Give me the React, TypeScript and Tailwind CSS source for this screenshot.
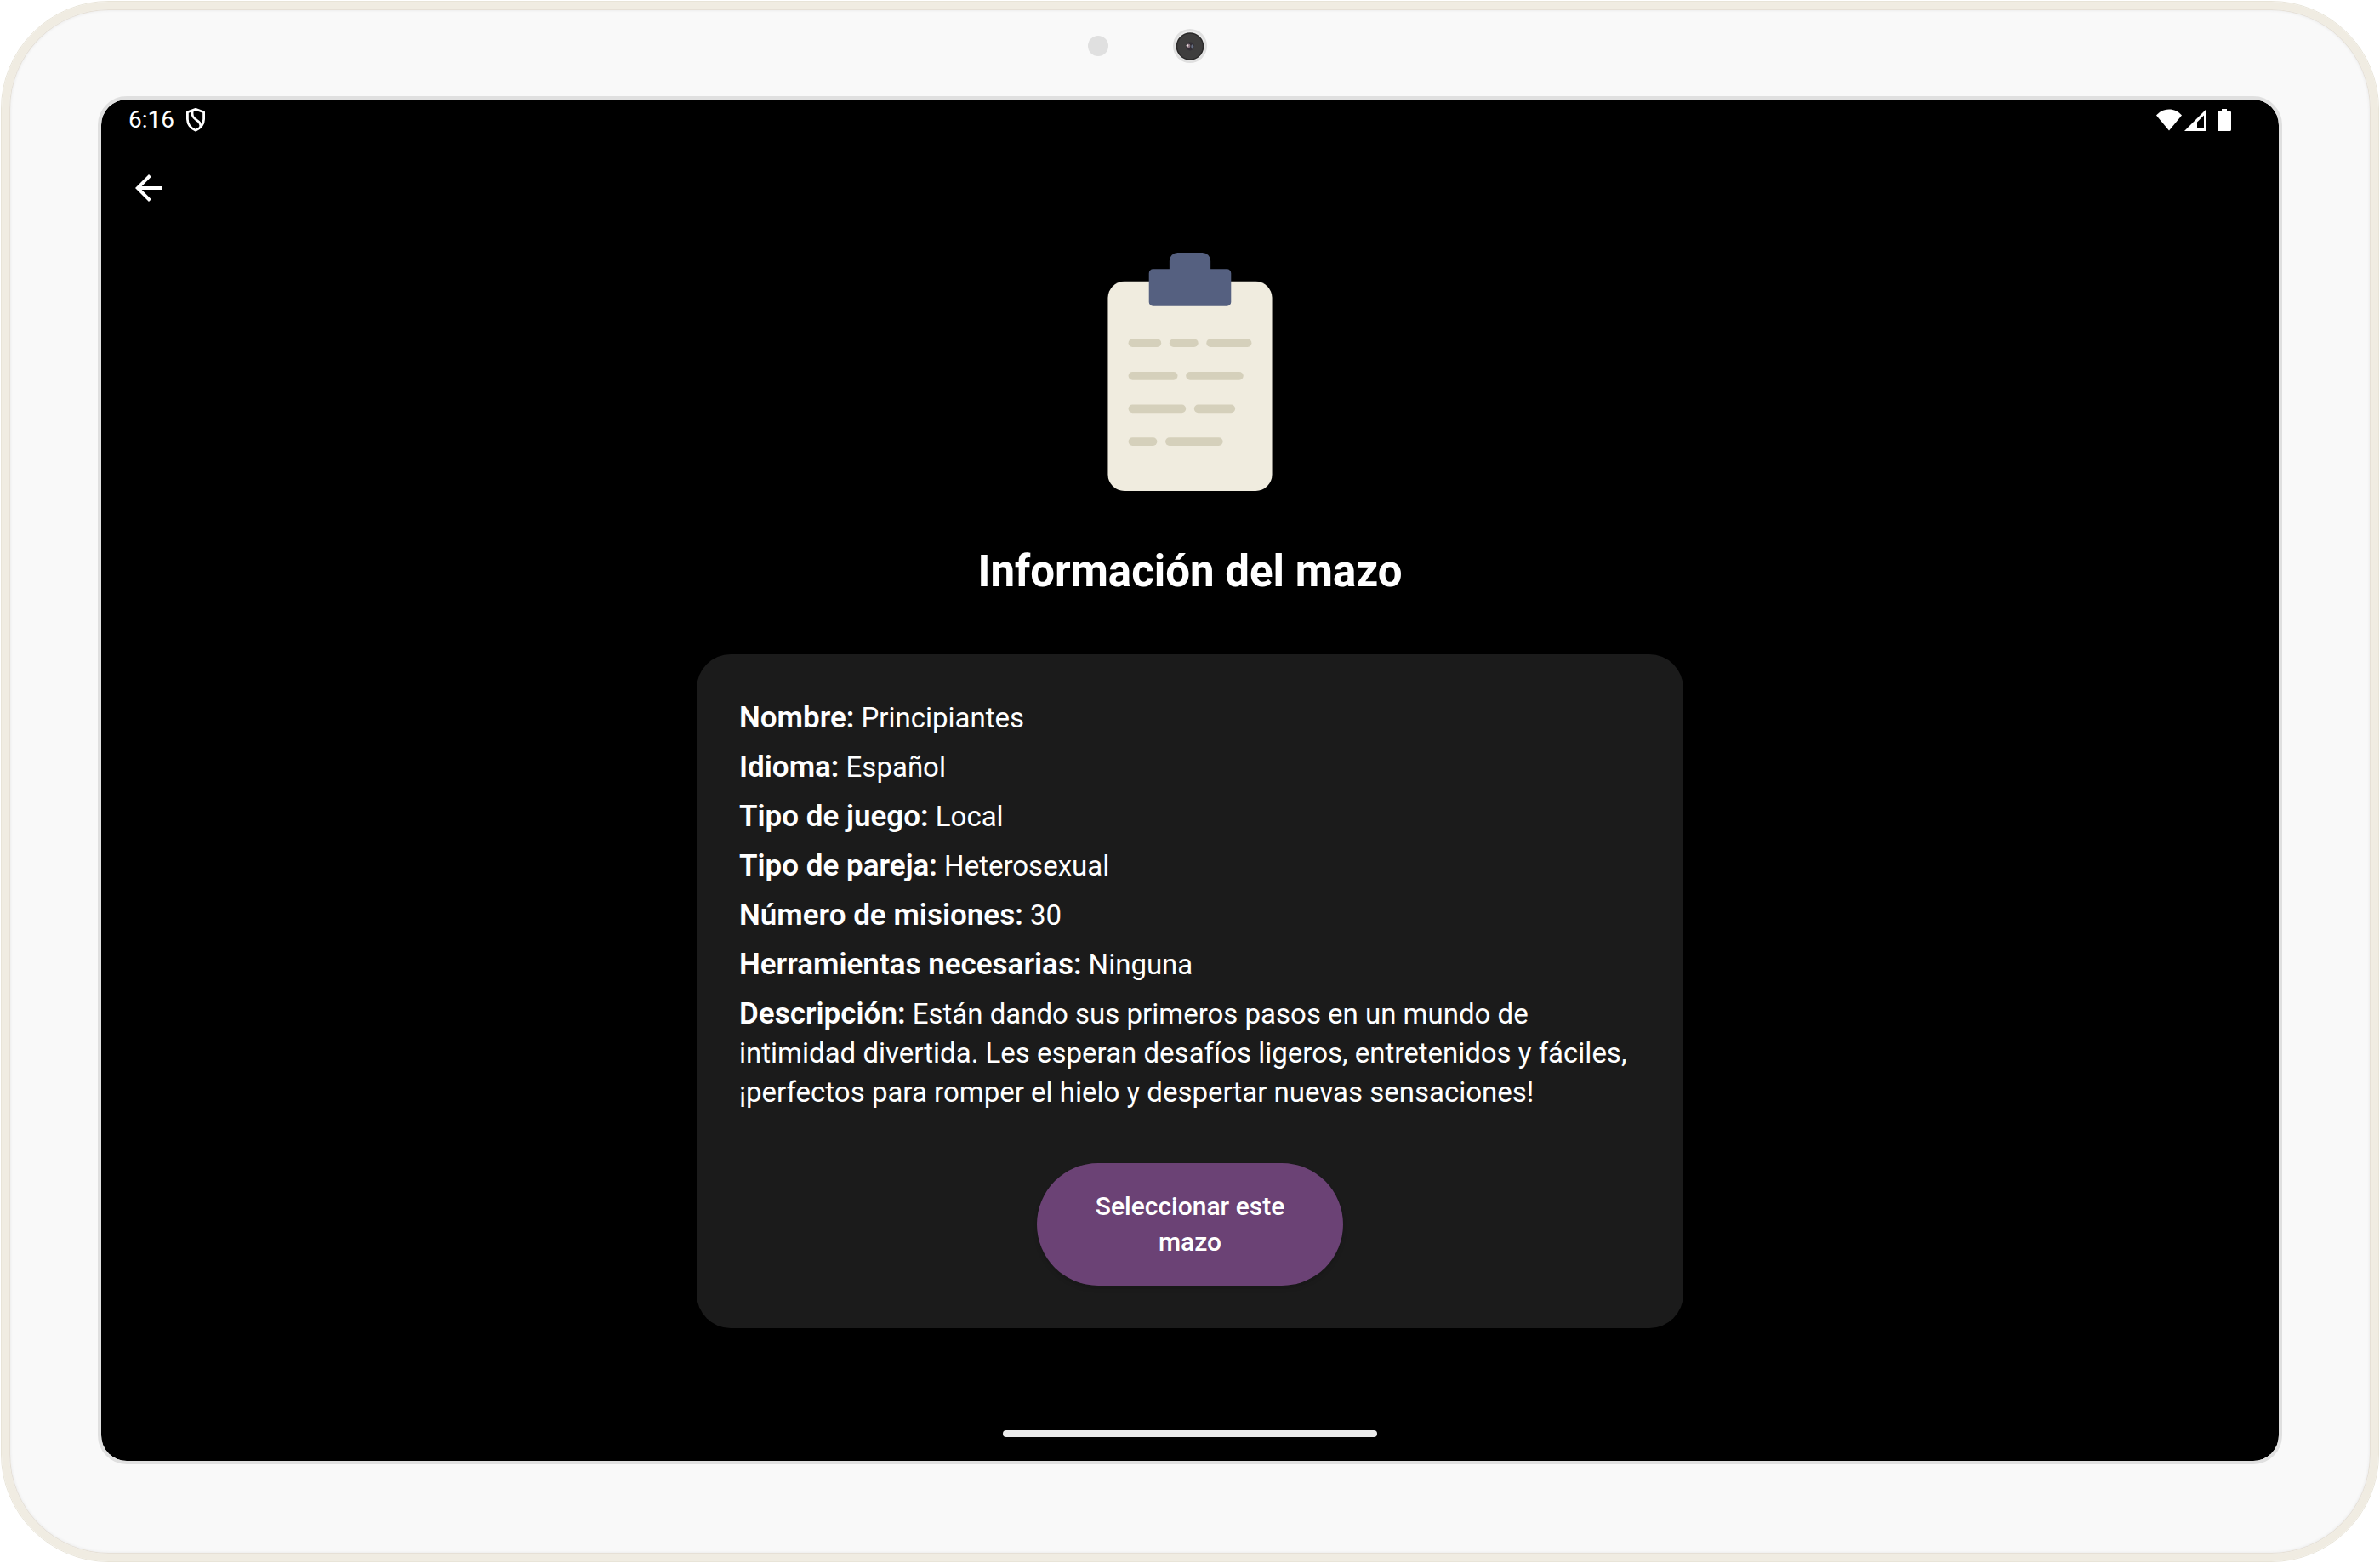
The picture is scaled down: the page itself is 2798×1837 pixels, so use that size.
const details = [
  { label: "Nombre:", value: "Principiantes" },
  { label: "Idioma:", value: "Español" },
  { label: "Tipo de juego:", value: "Local" },
  { label: "Tipo de pareja:", value: "Heterosexual" },
  { label: "Número de misiones:", value: "30" },
  { label: "Herramientas necesarias:", value: "Ninguna" },
  {
    label: "Descripción:",
    value:
      "Están dando sus primeros pasos en un mundo de intimidad divertida. Les esperan desafíos ligeros, entretenidos y fáciles, ¡perfectos para romper el hielo y despertar nuevas sensaciones!",
  },
];

// Text strokes on the clipboard: [start x, end x, top y]
const strokes = [
  [14, 22, 21],
  [24, 31, 21],
  [33, 44, 21],
  [14, 26, 29],
  [28, 42, 29],
  [14, 28, 37],
  [30, 40, 37],
  [14, 21, 45],
  [23, 37, 45],
];

function Clipboard() {
  return (
    <svg viewBox="0 0 58 58" className="size-[280px]" aria-hidden="true">
      <rect x="9" y="7" width="40" height="51" rx="4" fill="#F0ECDF" />
      <path
        d="M34 4V2a2 2 0 0 0-2-2h-6a2 2 0 0 0-2 2v2h-4a1 1 0 0 0-1 1v7a1 1 0 0 0 1 1h18a1 1 0 0 0 1-1V5a1 1 0 0 0-1-1z"
        fill="#556080"
      />
      {strokes.map(([x1, x2, y]) => (
        <rect key={`${x1}-${y}`} x={x1} y={y} width={x2 - x1} height="2" rx="1" fill="#D5D0BB" />
      ))}
    </svg>
  );
}

function StatusBar() {
  return (
    <div className="flex h-12 items-center justify-between pr-[56px] pl-8 text-[28px] leading-none text-white">
      <div className="flex items-center gap-3">
        <span>6:16</span>
        <svg viewBox="0 0 24 30" className="h-[30px] w-6" fill="none" stroke="#fff" strokeWidth="2.8" strokeLinejoin="round" aria-hidden="true">
          <path d="M13 2.400 3.400 5.800v8.200c0 6 4 11 9.600 13.200 5.600-2.200 9.600-7.200 9.600-13.200V5.800z" />
          <path d="M9.400 4c-1.400 5 .2 8 3.800 10.400 4 2.800 6.200 4.800 5.600 9" />
        </svg>
      </div>
      <div className="flex items-end">
        <svg viewBox="0 0 30 26" className="h-[26px] w-[30px]" fill="#fff" aria-hidden="true">
          <path d="M15 25.500 0 7.600C4 3 9.300.5 15 .5S26 3 30 7.600z" />
        </svg>
        <svg viewBox="0 0 26 26" className="ml-[3px] h-[26px] w-[26px]" fill="#fff" fillRule="evenodd" aria-hidden="true">
          <path d="M0 26 25.500.5V26zM15 23h8V7.500l-8 8z" />
        </svg>
        <svg viewBox="0 0 16 26" className="ml-[13px] h-[26px] w-4" fill="#fff" aria-hidden="true">
          <path d="M5 0h6v2.500h3.400A1.600 1.600 0 0 1 16 4.100v20.300a1.600 1.600 0 0 1-1.600 1.600H1.600A1.600 1.600 0 0 1 0 24.400V4.100a1.600 1.600 0 0 1 1.600-1.600H5z" />
        </svg>
      </div>
    </div>
  );
}

function Bezel() {
  return (
    <div className="flex h-[101px] items-center justify-center gap-[76px] pb-[18px]" aria-hidden="true">
      <div className="size-6 rounded-full bg-[#e0e0e0]" />
      <svg viewBox="0 0 40 40" className="size-10">
        <circle cx="20" cy="20" r="20" fill="#e0e0e0" />
        <circle cx="20" cy="20" r="17.5" fill="#ececec" />
        <circle cx="20" cy="20.500" r="16.300" fill="#2c2b2b" />
        <circle cx="20" cy="20.500" r="14.800" fill="#3f3e3e" />
        <circle cx="20" cy="20.500" r="5" fill="#332f36" />
        <circle cx="18" cy="20" r="2.400" fill="#8a7580" />
        <circle cx="17" cy="19.500" r="1.300" fill="#efe4e2" />
        <ellipse cx="22.800" cy="20.800" rx="1.500" ry="2.600" fill="#667083" />
      </svg>
      <div className="size-6" />
    </div>
  );
}

export default function App() {
  return (
    <div className="flex min-h-screen bg-white p-px font-['Roboto',sans-serif]">
      <div className="flex grow flex-col rounded-[127px] border border-[#e8e4d8]">
        <div className="flex grow flex-col rounded-[126px] border-[9px] border-[#f0ece2] bg-[#f9f9f9] px-[104px] pt-px pb-[105px] shadow-[inset_0_0_0_1px_#e6e0d6,inset_0_0_4px_#dcdcdc]">
          <Bezel />
          <div className="flex grow flex-col overflow-hidden rounded-[34px] border-4 border-[#e0e0e0] bg-[#e0e0e0]">
            <div className="flex grow flex-col rounded-[30px] bg-black text-white">
              <StatusBar />
              <header className="flex h-28 items-center pl-8">
                <button type="button" aria-label="Atrás" className="flex size-12 items-center justify-center">
                  <svg viewBox="0 0 24 24" className="size-12" fill="#fff" aria-hidden="true">
                    <path d="M20 11H7.830l5.590-5.590L12 4l-8 8 8 8 1.410-1.410L7.830 13H20z" />
                  </svg>
                </button>
              </header>
              <main className="flex grow flex-col items-center pt-5">
                <Clipboard />
                <h1 className="mt-16 text-[51px] leading-[62px] font-bold">Información del mazo</h1>
                <section className="mt-[66px] flex w-[1160px] max-w-full flex-col items-center rounded-[40px] bg-[#1b1b1b] px-[50px] pt-[52px] pb-[50px]">
                  <dl className="flex w-full flex-col gap-3 text-[33px] leading-[46px]">
                    {details.map(({ label, value }) => (
                      <div key={label}>
                        <dt className="inline text-[35px] leading-none font-semibold">{label}</dt>{" "}
                        <dd className="inline">{value}</dd>
                      </div>
                    ))}
                  </dl>
                  <button
                    type="button"
                    className="mt-[60px] w-[360px] rounded-full bg-[#6b4275] px-14 py-[30px] text-[30px] leading-[42px] font-medium shadow-md"
                  >
                    Seleccionar este mazo
                  </button>
                </section>
              </main>
              <div className="mb-7 h-2 w-[440px] self-center rounded-full bg-[#ebebeb]" />
            </div>
          </div>
        </div>
      </div>
    </div>
  );
}
